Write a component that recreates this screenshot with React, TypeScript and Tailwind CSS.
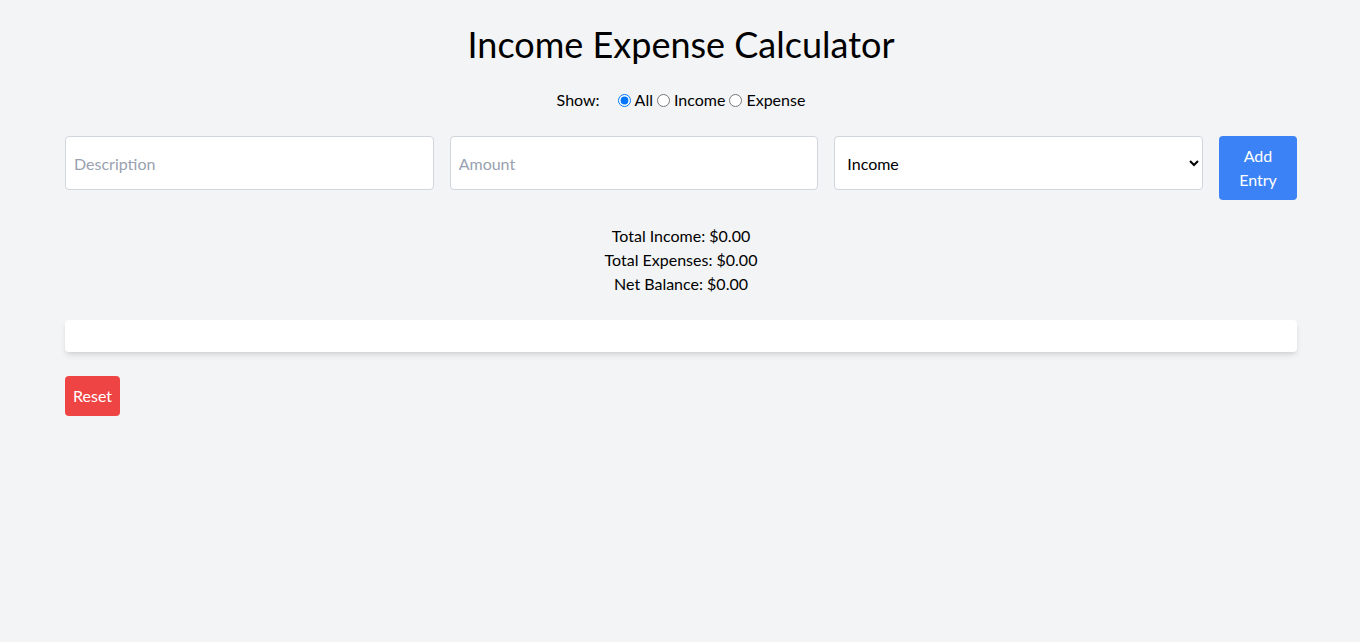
import { useState } from "react";

export default function App() {
  const [filter, setFilter] = useState("all");
  const [type, setType] = useState("income");

  return (
    <div className="min-h-screen bg-gray-100 pt-6 pr-[63px] pb-6 pl-[65px] font-['Lato',sans-serif] text-black">
      <h1 className="mb-6 text-center text-4xl">Income Expense Calculator</h1>

      <div className="mb-6 flex items-center justify-center text-base leading-6">
        <span className="mr-4">Show:</span>
        <label className="flex items-center">
          <input type="radio" name="filter" checked={filter === "all"} onChange={() => setFilter("all")} className="mr-1 ml-0.5 h-[13px] w-[13px]" />
          All
        </label>
        <label className="ml-1 flex items-center">
          <input type="radio" name="filter" checked={filter === "income"} onChange={() => setFilter("income")} className="mr-1 h-[13px] w-[13px]" />
          Income
        </label>
        <label className="ml-1 flex items-center">
          <input type="radio" name="filter" checked={filter === "expense"} onChange={() => setFilter("expense")} className="mr-1 h-[13px] w-[13px]" />
          Expense
        </label>
      </div>

      <div className="mb-6 flex items-start gap-4">
        <input
          type="text"
          placeholder="Description"
          className="h-[54px] min-w-0 flex-1 rounded border border-gray-300 bg-white px-2 placeholder:text-gray-400"
        />
        <input
          type="number"
          placeholder="Amount"
          className="h-[54px] min-w-0 flex-1 rounded border border-gray-300 bg-white px-2 placeholder:text-gray-400"
        />
        <select
          value={type}
          onChange={(e) => setType(e.target.value)}
          className="h-[54px] min-w-0 flex-1 rounded border border-gray-300 bg-white px-2"
        >
          <option value="income">Income</option>
          <option value="expense">Expense</option>
        </select>
        <button className="w-[78px] shrink-0 rounded bg-[#3b82f6] px-4 py-2 leading-6 text-white">Add Entry</button>
      </div>

      <div className="mb-6 text-center leading-6">
        <p>Total Income: $0.00</p>
        <p>Total Expenses: $0.00</p>
        <p>Net Balance: $0.00</p>
      </div>

      <ul className="mb-6 rounded bg-white p-4 shadow-md"></ul>

      <button className="rounded bg-[#ef4444] p-2 leading-6 text-white">Reset</button>
    </div>
  );
}
